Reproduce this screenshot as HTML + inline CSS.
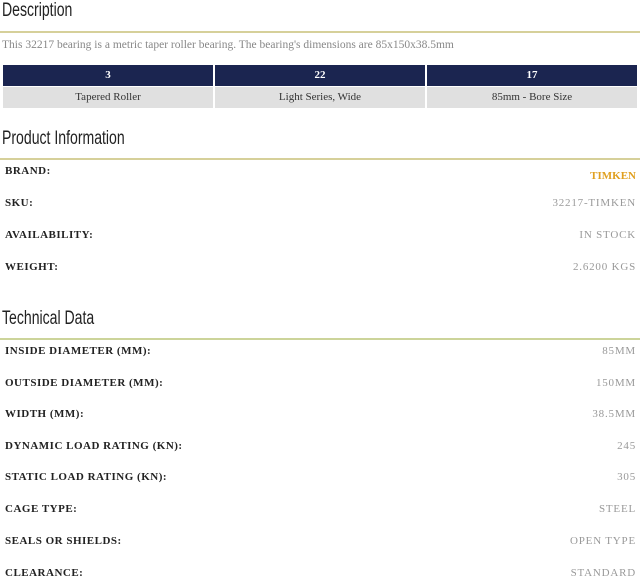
<!DOCTYPE html>
<html><head><style>
body{margin:0;width:640px;height:579px;overflow:hidden;background:#fff;font-family:"Liberation Serif",serif;position:relative}
.h{position:absolute;left:2px;font-family:"Liberation Sans Narrow","Liberation Sans",sans-serif;font-size:19px;color:#222;transform:scaleX(.74);transform-origin:left}
.ln{position:absolute;left:0;width:640px;height:2px;background:#d6d09a}
.desc{position:absolute;left:2px;top:39px;font-size:11.5px;color:#888;white-space:nowrap}
.c{position:absolute;width:210px;height:21px;line-height:21px;text-align:center;font-size:11px}
.n{background:#1b2550;color:#fff;font-weight:bold}
.g{background:#e0e0e0;color:#333}
.l{position:absolute;left:5px;font-size:11px;font-weight:bold;letter-spacing:.5px;color:#222}
.v{position:absolute;right:4px;font-size:11px;letter-spacing:.8px;color:#999}
</style></head><body>
<div class="h" style="top:0px">Description</div>
<div class="ln" style="top:31px"></div>
<div class="desc">This 32217 bearing is a metric taper roller bearing. The bearing's dimensions are 85x150x38.5mm</div>
<div class="c n" style="left:3px;top:65px">3</div>
<div class="c n" style="left:215px;top:65px">22</div>
<div class="c n" style="left:427px;top:65px">17</div>
<div class="c g" style="left:3px;top:87px">Tapered Roller</div>
<div class="c g" style="left:215px;top:87px">Light Series, Wide</div>
<div class="c g" style="left:427px;top:87px">85mm - Bore Size</div>
<div class="h" style="top:128px">Product Information</div>
<div class="ln" style="top:158px"></div>
<div class="l" style="top:165px">BRAND:</div><div class="v" style="top:170px;color:#e0a020;font-weight:bold;letter-spacing:0">TIMKEN</div>
<div class="l" style="top:197px">SKU:</div><div class="v" style="top:197px">32217-TIMKEN</div>
<div class="l" style="top:229px">AVAILABILITY:</div><div class="v" style="top:229px">IN STOCK</div>
<div class="l" style="top:261px">WEIGHT:</div><div class="v" style="top:261px">2.6200 KGS</div>
<div class="h" style="top:308px">Technical Data</div>
<div class="ln" style="top:338px;background:#ccd49a"></div>
<div class="l" style="top:345px">INSIDE DIAMETER (MM):</div><div class="v" style="top:345px">85MM</div>
<div class="l" style="top:377px">OUTSIDE DIAMETER (MM):</div><div class="v" style="top:377px">150MM</div>
<div class="l" style="top:408px">WIDTH (MM):</div><div class="v" style="top:408px">38.5MM</div>
<div class="l" style="top:440px">DYNAMIC LOAD RATING (KN):</div><div class="v" style="top:440px">245</div>
<div class="l" style="top:471px">STATIC LOAD RATING (KN):</div><div class="v" style="top:471px">305</div>
<div class="l" style="top:503px">CAGE TYPE:</div><div class="v" style="top:503px">STEEL</div>
<div class="l" style="top:535px">SEALS OR SHIELDS:</div><div class="v" style="top:535px">OPEN TYPE</div>
<div class="l" style="top:567px">CLEARANCE:</div><div class="v" style="top:567px">STANDARD</div>
</body></html>
